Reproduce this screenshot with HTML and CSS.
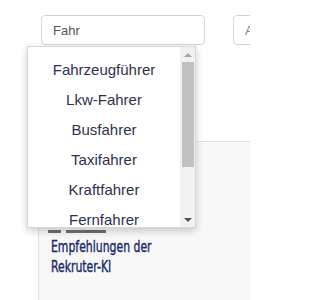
FILE: index.html
```html
<!DOCTYPE html>
<html lang="de">
<head>
<meta charset="utf-8">
<link rel="stylesheet" href="styles.css">
</head>
<body>
<div class="page">
  <div class="search">
    <div class="field">
      <input class="input" type="text" value="Fahr">
      <div class="dropdown">
        <ul class="list">
          <li class="option">Fahrzeugführer</li>
          <li class="option">Lkw-Fahrer</li>
          <li class="option">Busfahrer</li>
          <li class="option">Taxifahrer</li>
          <li class="option">Kraftfahrer</li>
          <li class="option">Fernfahrer</li>
        </ul>
        <div class="scrollbar">
          <div class="sb-btn"><span class="arrow-up"></span></div>
          <div class="sb-track"><div class="sb-thumb"></div></div>
          <div class="sb-btn"><span class="arrow-down"></span></div>
        </div>
      </div>
    </div>
    <div class="field field-second">
      <input class="input" type="text" placeholder="Arbeitsort">
    </div>
  </div>
  <div class="panel">
    <div class="meta"><span class="meta-icon"></span><span class="meta-text"></span></div>
    <h2 class="title"><span class="title-line">Empfehlungen der</span><span class="title-line">Rekruter-KI</span></h2>
  </div>
</div>
</body>
</html>
```
FILE: styles.css
```css
html, body {
  margin: 0;
  padding: 0;
  background: #ffffff;
  font-family: "Liberation Sans", Arial, sans-serif;
}

.page {
  width: 250px;
  height: 300px;
  overflow: hidden;
  padding-top: 15px;
  box-sizing: border-box;
}

.search {
  display: flex;
  gap: 28px;
  padding-left: 41px;
}

.field {
  position: relative;
  flex: 0 0 164px;
}

.input {
  display: block;
  width: 100%;
  height: 30px;
  box-sizing: border-box;
  margin: 0;
  border: 1px solid #d4d4d4;
  border-radius: 4px;
  padding: 0 11px;
  font-family: "Liberation Sans", Arial, sans-serif;
  font-size: 13px;
  color: #555555;
  background: #ffffff;
  outline: none;
}

.input::placeholder {
  color: #8a8a8a;
}

.dropdown {
  position: absolute;
  top: 31px;
  left: -14px;
  width: 169px;
  height: 182px;
  box-sizing: border-box;
  display: flex;
  background: #ffffff;
  border: 1px solid #d6d6d6;
  box-shadow: 0 3px 8px rgba(0, 0, 0, 0.2);
  z-index: 5;
}

.list {
  flex: 1;
  margin: 0;
  padding: 8px 0;
  list-style: none;
  overflow: hidden;
}

.option {
  height: 30px;
  line-height: 30px;
  text-align: center;
  font-size: 15px;
  color: #30304e;
  white-space: nowrap;
}

.scrollbar {
  flex: 0 0 15px;
  display: flex;
  flex-direction: column;
  background: #f1f1f1;
}

.sb-btn {
  flex: 0 0 15px;
  display: flex;
  align-items: center;
  justify-content: center;
}

.arrow-up {
  width: 0;
  height: 0;
  border-left: 4px solid transparent;
  border-right: 4px solid transparent;
  border-bottom: 4px solid #a3a3a3;
}

.arrow-down {
  width: 0;
  height: 0;
  border-left: 4px solid transparent;
  border-right: 4px solid transparent;
  border-top: 4px solid #505050;
}

.sb-track {
  flex: 1;
  display: flex;
  flex-direction: column;
}

.sb-thumb {
  height: 105px;
  margin: 0 1px 0 2px;
  background: #c1c1c1;
}

.panel {
  margin-top: 96px;
  margin-left: 38px;
  height: 200px;
  background: #f8f8f8;
  border-left: 1px solid #e2e2e2;
  border-top: 1px solid #e2e2e2;
  padding: 88px 10px 0 9px;
  box-sizing: border-box;
}

.meta {
  display: flex;
  gap: 5px;
  height: 3px;
}

.meta-icon {
  width: 13px;
  background: #6f6f6f;
}

.meta-text {
  width: 40px;
  background: #6f6f6f;
}

.title {
  margin: 4px 0 0 3px;
  font-family: "DejaVu Sans Condensed", "DejaVu Sans", sans-serif;
  font-stretch: condensed;
  font-weight: normal;
  font-size: 16px;
  line-height: 20px;
  color: #1a2a6a;
  -webkit-text-stroke: 0.4px #1a2a6a;
  transform: scaleX(0.755);
  transform-origin: left top;
  white-space: nowrap;
}

.title-line {
  display: block;
}
```
